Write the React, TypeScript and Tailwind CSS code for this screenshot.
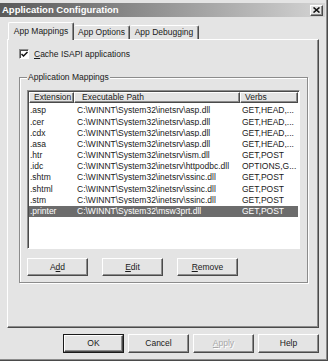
import React from "react";

const rows = [
  [".asp", "C:\\WINNT\\System32\\inetsrv\\asp.dll", "GET,HEAD,..."],
  [".cer", "C:\\WINNT\\System32\\inetsrv\\asp.dll", "GET,HEAD,..."],
  [".cdx", "C:\\WINNT\\System32\\inetsrv\\asp.dll", "GET,HEAD,..."],
  [".asa", "C:\\WINNT\\System32\\inetsrv\\asp.dll", "GET,HEAD,..."],
  [".htr", "C:\\WINNT\\System32\\inetsrv\\ism.dll", "GET,POST"],
  [".idc", "C:\\WINNT\\System32\\inetsrv\\httpodbc.dll", "OPTIONS,G..."],
  [".shtm", "C:\\WINNT\\System32\\inetsrv\\ssinc.dll", "GET,POST"],
  [".shtml", "C:\\WINNT\\System32\\inetsrv\\ssinc.dll", "GET,POST"],
  [".stm", "C:\\WINNT\\System32\\inetsrv\\ssinc.dll", "GET,POST"],
  [".printer", "C:\\WINNT\\System32\\msw3prt.dll", "GET,POST"],
];

const raised =
  "border border-t-white border-l-white border-r-[#4a4a4a] border-b-[#4a4a4a] shadow-[inset_-1px_-1px_0_#8c8c8c]";

const Button = ({ children, isDefault, disabled, className }: any) => (
  <div
    className={`${className} ${
      isDefault ? "border border-[#1a1a1a]" : ""
    } flex`}
  >
    <button
      className={`flex-1 ${raised} bg-[#e4e4e4] flex items-center justify-center ${
        disabled ? "text-[#a8a8a8] [text-shadow:1px_1px_0_#fff]" : ""
      }`}
    >
      {children}
    </button>
  </div>
);

export default function App() {
  return (
    <div className="w-[328px] h-[361px] bg-[#e4e4e4] font-['Liberation_Sans',Arial,sans-serif] text-[8.5px] leading-none text-[#1a1a1a] flex flex-col pt-[3px] pr-[3px] shadow-[inset_-1px_-1px_0_#4a4a4a,inset_-2px_-2px_0_#8c8c8c] overflow-hidden">
      {/* title bar */}
      <div className="h-[14px] flex items-center justify-between bg-linear-to-r from-[#5a5a5a] to-[#d4d4d4] pl-[2px] pr-[2px]">
        <span className="text-white font-bold text-[9.5px]">
          Application Configuration
        </span>
        <div className={`w-[13px] h-[11px] bg-[#e4e4e4] ${raised} flex items-center justify-center`}>
          <svg width="7" height="6" viewBox="0 0 7 6">
            <path d="M0.5 0.5 L6.5 5.5 M6.5 0.5 L0.5 5.5" stroke="#111" strokeWidth="1.6" />
          </svg>
        </div>
      </div>

      <div className="flex flex-col pl-[7px] pr-[6px] mt-[5px]">
        {/* tabs */}
        <div className="flex items-end h-[18px] -mb-px relative z-10 pl-[1px]">
          <div className="w-[66px] h-[18px] bg-[#e4e4e4] border-t border-l border-r border-t-white border-l-white border-r-[#4a4a4a] shadow-[inset_-1px_0_0_#8c8c8c] rounded-t-[2px] flex items-center justify-center pb-[1px]">
            App Mappings
          </div>
          <div className="w-[56px] h-[14px] mb-[1px] border-t border-r border-t-white border-r-[#4a4a4a] shadow-[inset_-1px_0_0_#8c8c8c] rounded-t-[2px] flex items-center justify-center">
            App Options
          </div>
          <div className="w-[69px] h-[14px] mb-[1px] border-t border-r border-t-white border-r-[#4a4a4a] shadow-[inset_-1px_0_0_#8c8c8c] rounded-t-[2px] flex items-center justify-center">
            App Debugging
          </div>
        </div>

        {/* tab panel */}
        <div className={`h-[289px] ${raised} flex flex-col px-[11px] pt-[9px]`}>
          <div className="flex items-center gap-[5px] h-[10px]">
            <div className="w-[10px] h-[10px] bg-white border border-t-[#8c8c8c] border-l-[#8c8c8c] border-r-white border-b-white shadow-[inset_1px_1px_0_#4a4a4a] flex items-center justify-center">
              <svg width="7" height="7" viewBox="0 0 7 7">
                <path d="M0.5 3 L2.5 5 L6.5 1" stroke="#111" strokeWidth="1.5" fill="none" />
              </svg>
            </div>
            <span>
              <u>C</u>ache ISAPI applications
            </span>
          </div>

          <fieldset className="mt-[13px] border border-[#8c8c8c] shadow-[inset_1px_1px_0_#fff,1px_1px_0_#fff] px-[7px] pb-[6px] pt-[8px]">
            <legend className="px-[1px] leading-[10px] bg-[#e4e4e4]">
              Application Mappings
            </legend>

            {/* list view */}
            <div className="h-[159px] bg-white border border-t-[#8c8c8c] border-l-[#8c8c8c] border-r-white border-b-white shadow-[inset_1px_1px_0_#4a4a4a] p-px flex flex-col">
              <div className="flex h-[11px] shrink-0">
                <div className={`w-[45px] ${raised} bg-[#e4e4e4] flex items-center pl-[4px]`}>
                  Extension
                </div>
                <div className={`w-[166px] ${raised} bg-[#e4e4e4] flex items-center pl-[7px]`}>
                  Executable Path
                </div>
                <div className={`w-[58px] ${raised} bg-[#e4e4e4] flex items-center pl-[4px]`}>
                  Verbs
                </div>
              </div>
              <div className="flex flex-col pt-[2px]">
                {rows.map(([ext, path, verbs], i) => {
                  const selected = i === rows.length - 1;
                  return (
                    <div
                      key={ext}
                      className={`flex h-[11.2px] items-center whitespace-nowrap ${
                        selected ? "bg-[#6c6c6c] text-white" : ""
                      }`}
                    >
                      <div className="w-[45px] pl-[1px] overflow-hidden">{ext}</div>
                      <div className="w-[166px] pl-[3px] overflow-hidden">{path}</div>
                      <div className="flex-1 pl-[2px] overflow-hidden">{verbs}</div>
                    </div>
                  );
                })}
              </div>
            </div>

            <div className="flex gap-[14px] mt-[9px]">
              <Button className="w-[61px] h-[18px]">
                <span>
                  A<u>d</u>d
                </span>
              </Button>
              <Button className="w-[61px] h-[18px]">
                <span>
                  <u>E</u>dit
                </span>
              </Button>
              <Button className="w-[61px] h-[18px]">
                <span>
                  <u>R</u>emove
                </span>
              </Button>
            </div>
          </fieldset>
        </div>
      </div>

      {/* dialog buttons */}
      <div className="flex justify-end gap-[4px] mt-[6px] pr-[6px]">
        <Button className="w-[61px] h-[19px]" isDefault>
          OK
        </Button>
        <Button className="w-[61px] h-[19px]">Cancel</Button>
        <Button className="w-[61px] h-[19px]" disabled>
          <span>
            <u>A</u>pply
          </span>
        </Button>
        <Button className="w-[61px] h-[19px]">Help</Button>
      </div>
    </div>
  );
}
